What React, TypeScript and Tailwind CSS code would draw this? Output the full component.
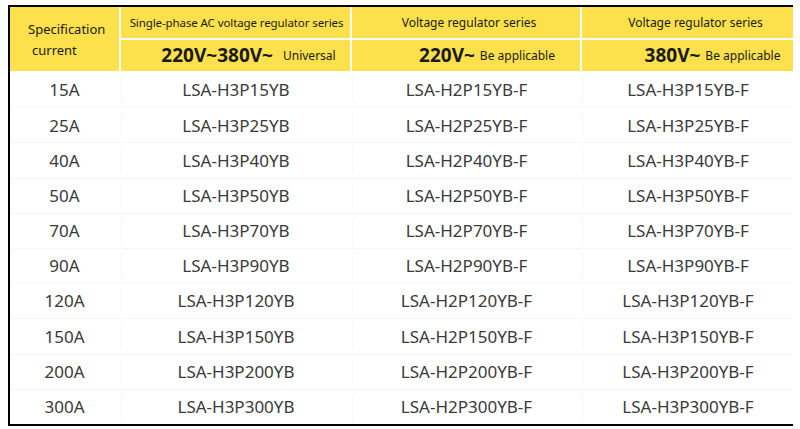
import React from "react";

const rows = [
    { current: "15A", code: "15" },
    { current: "25A", code: "25" },
    { current: "40A", code: "40" },
    { current: "50A", code: "50" },
    { current: "70A", code: "70" },
    { current: "90A", code: "90" },
    { current: "120A", code: "120" },
    { current: "150A", code: "150" },
    { current: "200A", code: "200" },
    { current: "300A", code: "300" },
];

const cols = "grid grid-cols-[109px_229px_228px_211px] gap-x-[2px]";

const App: React.FC = () => {
    return (
        <div className="h-[429px] w-[800px] bg-white pl-[8px] pt-[5px] font-['Noto_Sans',sans-serif]">
            <div className="w-[785px] border-y-2 border-l-2 border-black">
                {/* header */}
                <div className={`${cols} bg-white pb-[1px]`}>
                    <div className="row-span-2 flex flex-col justify-center bg-[#fce14c] pt-[2px] text-[13px] leading-[21px] text-[#1a1a1a]">
                        <span className="pl-[18px]">Specification</span>
                        <span className="pl-[22px]">current</span>
                    </div>
                    <div className="flex h-[31px] items-center justify-center whitespace-nowrap bg-[#fce14c] pl-[2px] text-[11.5px] tracking-[-0.1px] text-[#1a1a1a]">
                        Single-phase AC voltage regulator series
                    </div>
                    <div className="flex h-[31px] items-center justify-center bg-[#fce14c] pl-[6px] text-[12px] text-[#1a1a1a]">
                        Voltage regulator series
                    </div>
                    <div className="flex h-[31px] items-center justify-center bg-[#fce14c] pl-[16px] text-[12px] text-[#1a1a1a]">
                        Voltage regulator series
                    </div>
                    <div className="mt-[2px] flex h-[31px] items-center justify-center gap-[10px] bg-[#fce14c] pl-[26px] text-[#1a1a1a]">
                        <span className="text-[19px] font-bold">220V~380V~</span>
                        <span className="text-[12px]">Universal</span>
                    </div>
                    <div className="mt-[2px] flex h-[31px] items-center justify-center gap-[5px] bg-[#fce14c] pl-[42px] text-[#1a1a1a]">
                        <span className="text-[19px] font-bold">220V~</span>
                        <span className="text-[12px]">Be applicable</span>
                    </div>
                    <div className="mt-[2px] flex h-[31px] items-center justify-center gap-[5px] bg-[#fce14c] pl-[50px] text-[#1a1a1a]">
                        <span className="text-[19px] font-bold">380V~</span>
                        <span className="text-[12px]">Be applicable</span>
                    </div>
                </div>
                {/* body */}
                <div className="bg-white">
                    {rows.map((r, i) => (
                        <div
                            key={r.current}
                            className={`${cols} h-[35.2px] items-center text-[17px] text-[#3a3a3a] ${i > 0 ? "border-t border-[#f6f6f6]" : ""}`}
                        >
                            <div className="text-center">{r.current}</div>
                            <div className="border-l border-[#f6f6f6] text-center">LSA-H3P{r.code}YB</div>
                            <div className="border-l border-[#f6f6f6] text-center">LSA-H2P{r.code}YB-F</div>
                            <div className="border-l border-[#f6f6f6] text-center">LSA-H3P{r.code}YB-F</div>
                        </div>
                    ))}
                </div>
            </div>
        </div>
    );
};

export default App;
